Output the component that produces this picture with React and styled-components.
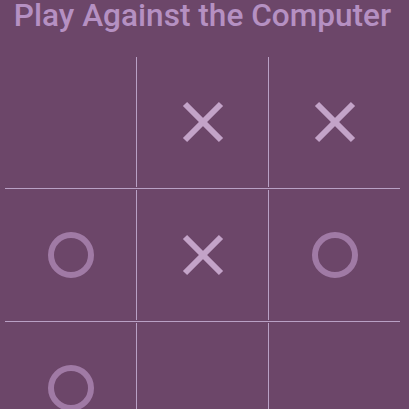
import React from "react";
import styled, { createGlobalStyle } from "styled-components";

const GlobalStyle = createGlobalStyle`
  html, body {
    margin: 0;
    padding: 0;
    background-color: #6c4669;
    overflow: hidden;
  }
  * {
    box-sizing: border-box;
  }
`;

const board = [
  ["", "X", "X"],
  ["O", "X", "O"],
  ["O", "", ""],
];

export default function App() {
  return (
    <Page>
      <GlobalStyle />
      <Title>Play Against the Computer</Title>
      <Board>
        {board.map((row, r) => (
          <React.Fragment key={r}>
            {r > 0 && <Divider />}
            <Row>
              {row.map((mark, c) => (
                <Cell key={c} $first={c === 0}>
                  {mark === "X" && <Cross />}
                  {mark === "O" && <Nought />}
                </Cell>
              ))}
            </Row>
          </React.Fragment>
        ))}
      </Board>
    </Page>
  );
}

function Cross() {
  return (
    <svg width="42" height="42" viewBox="0 0 42 42">
      <line x1="3" y1="3" x2="39" y2="39" stroke="#c3a3c8" strokeWidth="6" />
      <line x1="39" y1="3" x2="3" y2="39" stroke="#c3a3c8" strokeWidth="6" />
    </svg>
  );
}

function Nought() {
  return (
    <svg width="46" height="46" viewBox="0 0 46 46">
      <circle cx="23" cy="23" r="20" fill="none" stroke="#a07aa5" strokeWidth="6" />
    </svg>
  );
}

const Page = styled.div`
  width: 409px;
  height: 409px;
  overflow: hidden;
  padding: 0 9px 0 5px;
  background-color: #6c4669;
  font-family: Roboto, "Liberation Sans", sans-serif;
`;

const Title = styled.h1`
  margin: 0;
  font-size: 31.6px;
  line-height: 32px;
  font-weight: 500;
  color: #b590c2;
  text-align: center;
  white-space: nowrap;
`;

const Board = styled.div`
  width: 395px;
  margin-top: 25px;
  display: flex;
  flex-direction: column;
`;

const Row = styled.div`
  display: flex;
  height: 130px;
  flex-shrink: 0;
`;

const Divider = styled.div`
  height: 1px;
  flex-shrink: 0;
  margin: 1px 0;
  background-color: #b9a0c5;
`;

const Cell = styled.div`
  width: ${(p) => (p.$first ? "131px" : "132px")};
  border-left: ${(p) => (p.$first ? "none" : "1px solid #b9a0c5")};
  display: flex;
  align-items: center;
  justify-content: center;
`;
